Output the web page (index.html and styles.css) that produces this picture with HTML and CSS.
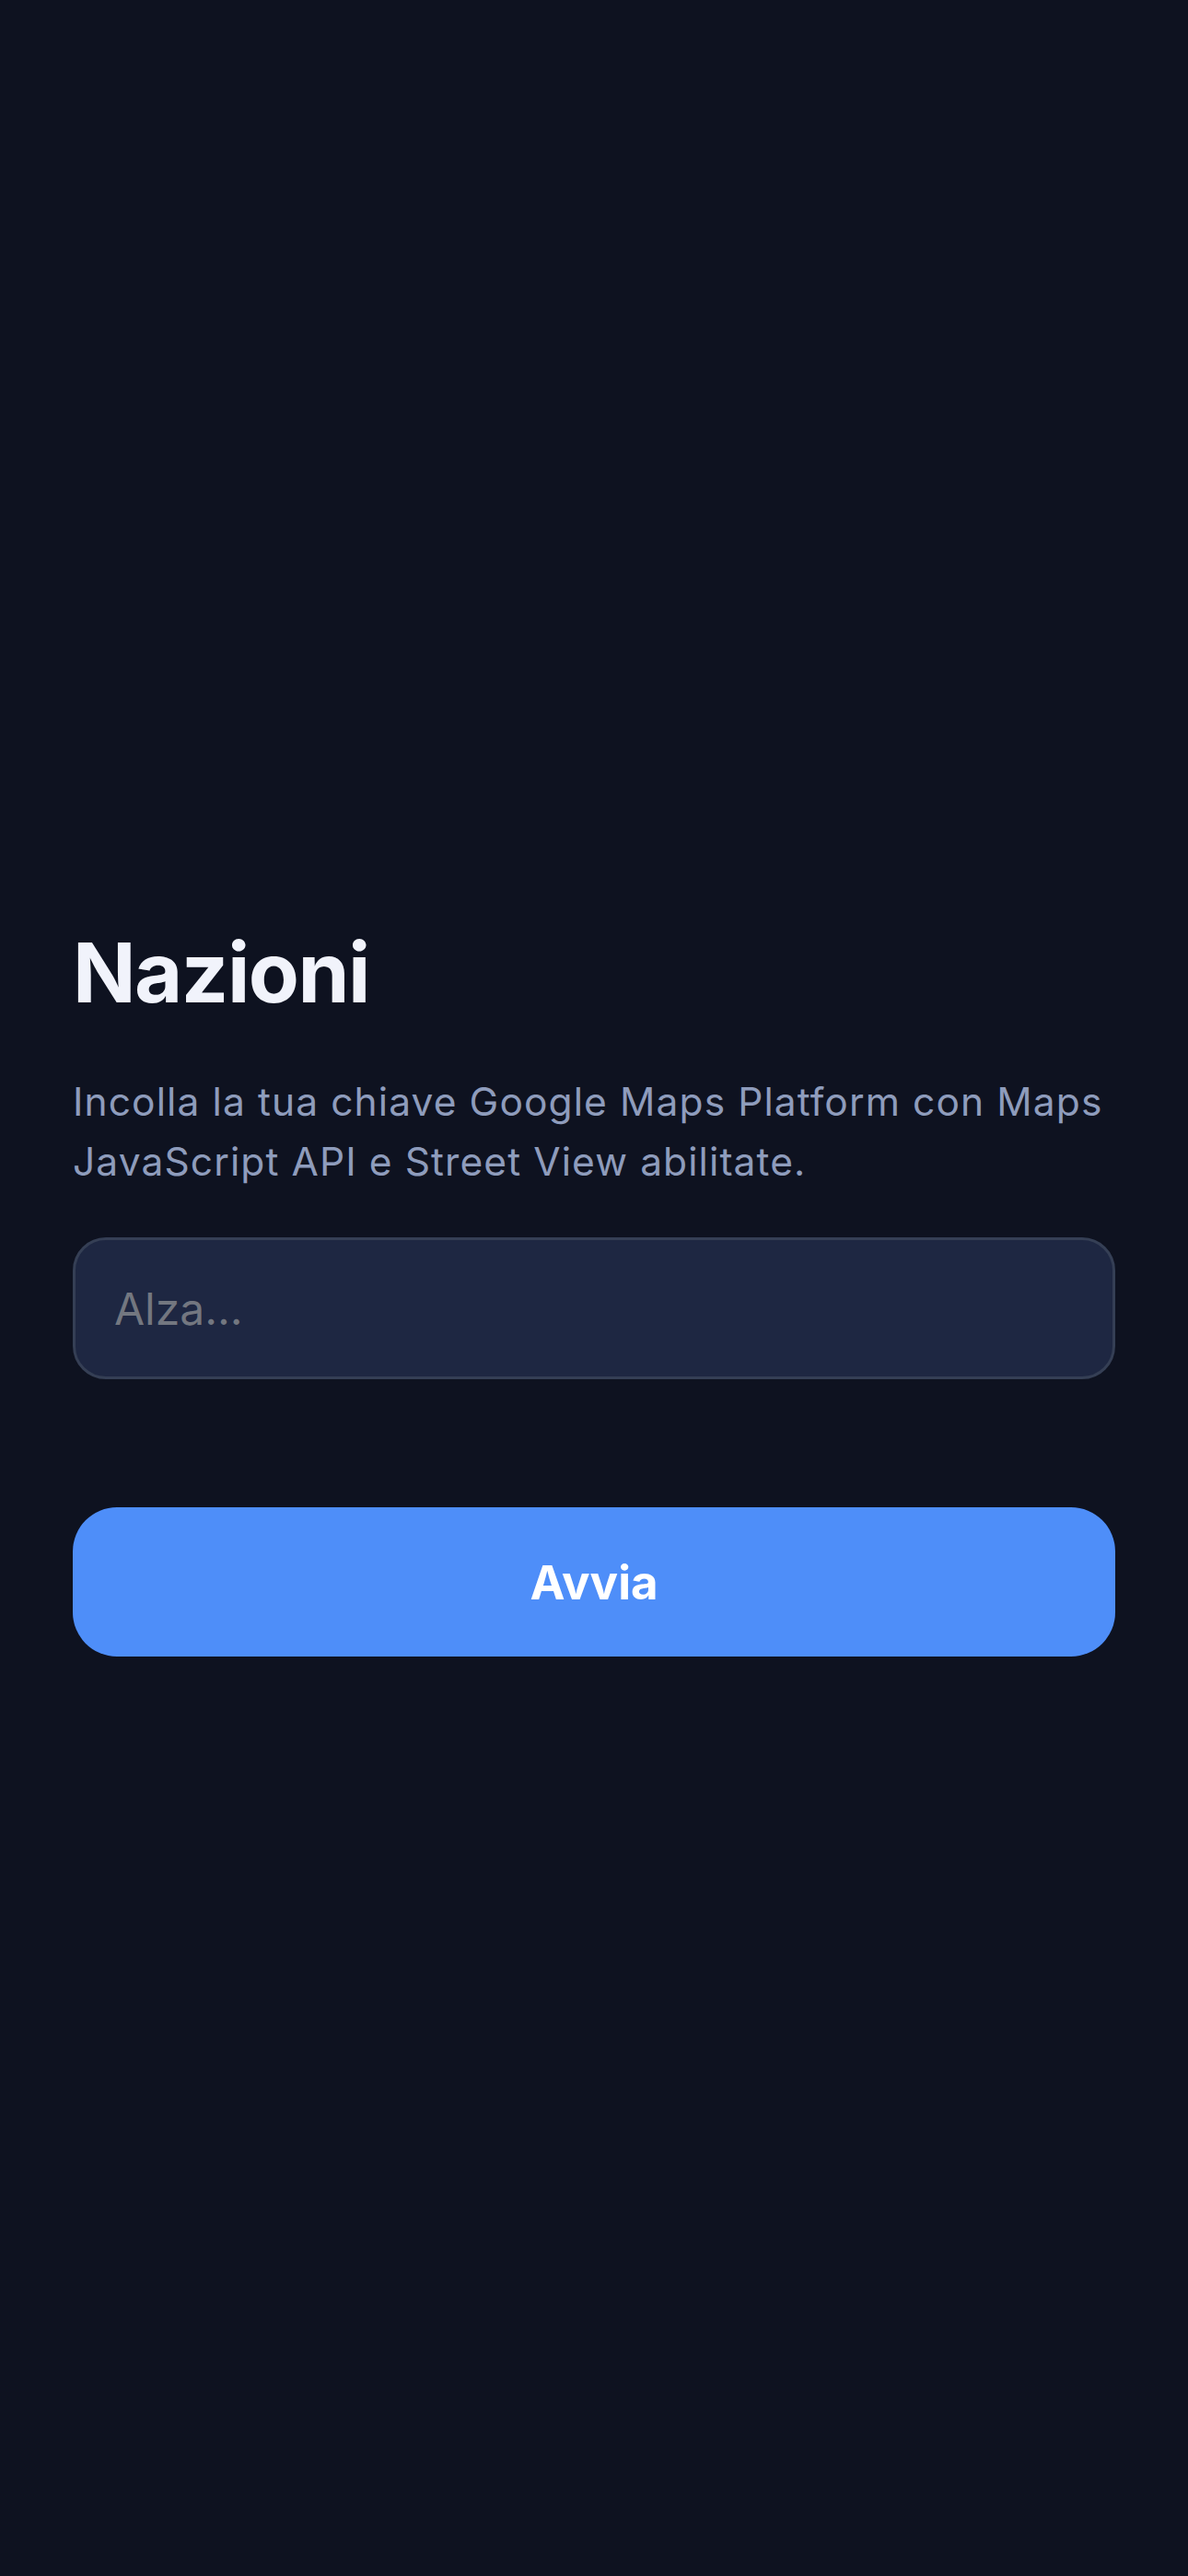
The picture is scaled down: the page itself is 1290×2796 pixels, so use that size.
FILE: index.html
```html
<!DOCTYPE html>
<html lang="it">
<head>
<meta charset="utf-8">
<title>Nazioni</title>
<link rel="stylesheet" href="styles.css">
</head>
<body>
<main class="screen">
  <section class="setup">
    <h1 class="title">Nazioni</h1>
    <p class="lead">Incolla la tua chiave Google Maps Platform con Maps JavaScript API e Street View abilitate.</p>
    <input class="key-input" type="text" placeholder="Alza...">
    <button class="start-btn" type="button">Avvia</button>
  </section>
</main>
</body>
</html>
```
FILE: styles.css
```css
html, body {
  margin: 0;
  padding: 0;
  background: #0e1220;
}
body {
  font-family: Inter, "Noto Sans", "Liberation Sans", sans-serif;
}
.screen {
  min-height: 2796px;
  display: flex;
  flex-direction: column;
  justify-content: center;
  padding: 0 79px;
  box-sizing: border-box;
}
.setup {
  display: flex;
  flex-direction: column;
  margin-top: 4px;
}
.title {
  margin: 0;
  font-size: 90px;
  line-height: 108px;
  font-weight: 700;
  letter-spacing: -1.5px;
  color: #f1f3fb;
}
.lead {
  margin: 53px 0 0;
  font-size: 42.5px;
  line-height: 65px;
  letter-spacing: 1.1px;
  color: #8e9cbc;
}
.key-input {
  margin-top: 50px;
  height: 154px;
  box-sizing: border-box;
  border: 3px solid #353f55;
  border-radius: 36px;
  background: #1e2742;
  padding: 0 42px;
  font-family: inherit;
  font-size: 48px;
  color: #e5e7eb;
  outline: none;
}
.key-input::placeholder {
  color: #737780;
}
.start-btn {
  margin-top: 139px;
  height: 162px;
  border: none;
  border-radius: 48px;
  background: #4e8ef9;
  color: #ffffff;
  font-family: inherit;
  font-size: 51px;
  font-weight: 700;
  cursor: pointer;
}
```
